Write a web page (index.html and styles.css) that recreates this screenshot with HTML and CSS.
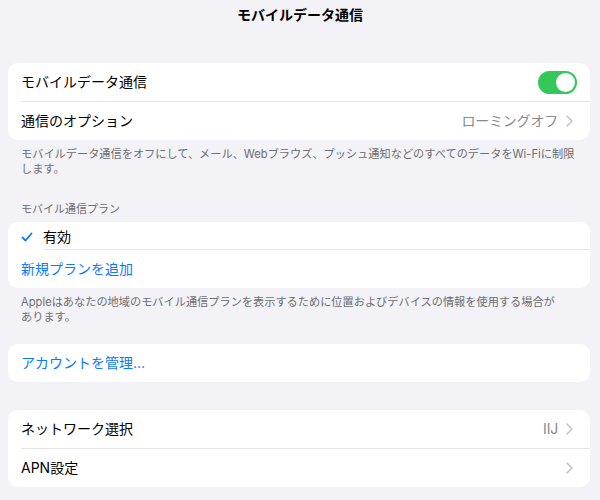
FILE: index.html
```html
<!DOCTYPE html>
<html lang="ja">
  <head>
    <meta charset="UTF-8" />
    <title>モバイルデータ通信</title>
    <link rel="stylesheet" href="styles.css">
  </head>
  <body>
    <div class="nav">モバイルデータ通信</div>

    <!-- モバイルデータ通信 -->
    <div class="card first">
      <div class="row">
        <div class="row-main">
          <span class="label">モバイルデータ通信</span>
          <span class="switch on"><span class="knob"></span></span>
        </div>
      </div>
      <div class="row">
        <div class="row-main">
          <span class="label">通信のオプション</span>
          <span class="value">ローミングオフ</span>
          <svg class="chev" width="7" height="12" viewBox="0 0 7 12"><path d="M1 1l5 5-5 5" fill="none" stroke="#c4c4c7" stroke-width="1.5" stroke-linecap="round" stroke-linejoin="round"/></svg>
        </div>
      </div>
    </div>
    <p class="foot">モバイルデータ通信をオフにして、メール、Webブラウズ、プッシュ通知などのすべてのデータをWi-Fiに制限します。</p>

    <!-- モバイル通信プラン -->
    <div class="section-title">モバイル通信プラン</div>
    <div class="card">
      <div class="row">
        <svg class="check" width="12" height="10" viewBox="0 0 12 10"><path d="M1.5 5.5l3 3 6-7" fill="none" stroke="#0a7aff" stroke-width="1.8" stroke-linecap="round" stroke-linejoin="round"/></svg>
        <div class="row-main short">
          <span class="label">有効</span>
        </div>
      </div>
      <div class="row">
        <div class="row-main">
          <span class="label link">新規プランを追加</span>
        </div>
      </div>
    </div>
    <p class="foot">Appleはあなたの地域のモバイル通信プランを表示するために位置およびデバイスの情報を使用する場合が<span class="nw">あります。</span></p>

    <div class="card account">
      <div class="row">
        <div class="row-main">
          <span class="label link">アカウントを管理...</span>
        </div>
      </div>
    </div>

    <div class="card network">
      <div class="row">
        <div class="row-main">
          <span class="label">ネットワーク選択</span>
          <span class="value">IIJ</span>
          <svg class="chev" width="7" height="12" viewBox="0 0 7 12"><path d="M1 1l5 5-5 5" fill="none" stroke="#c4c4c7" stroke-width="1.5" stroke-linecap="round" stroke-linejoin="round"/></svg>
        </div>
      </div>
      <div class="row">
        <div class="row-main">
          <span class="label">APN設定</span>
          <svg class="chev" width="7" height="12" viewBox="0 0 7 12"><path d="M1 1l5 5-5 5" fill="none" stroke="#c4c4c7" stroke-width="1.5" stroke-linecap="round" stroke-linejoin="round"/></svg>
        </div>
      </div>
    </div>
  </body>
</html>
```

FILE: styles.css
```css
* {
  margin: 0;
  padding: 0;
  box-sizing: border-box;
}
body {
  background-color: #f2f2f7;
  font-family: Inter, "Noto Sans CJK JP", sans-serif;
  color: #000;
}
.nav {
  height: 30px;
  line-height: 30px;
  text-align: center;
  font-size: 14px;
  font-weight: bold;
}
/* 
  カード
*/
.card {
  background-color: #fff;
  border-radius: 10px;
  margin: 0 10px 0 8px;
  overflow: hidden;
}
.card.first {
  margin-top: 33px;
}
.card.account {
  margin-top: 19px;
}
.card.network {
  margin-top: 28px;
}
.row {
  display: flex;
  align-items: center;
  padding-left: 13px;
}
.row-main {
  flex: 1;
  display: flex;
  align-items: center;
  height: 38px;
  padding-right: 13px;
  box-sizing: content-box;
}
.row:not(:last-child) .row-main {
  border-bottom: 1px solid #e4e4e8;
}
.row-main.short {
  height: 24px;
  padding-top: 3px;
}
.label {
  flex: 1;
  font-size: 14px;
  margin-bottom: 2px;
}
.link {
  color: #0a7aff;
}
.value {
  font-size: 14px;
  letter-spacing: -0.2px;
  color: #8a8a8e;
  margin-bottom: 2px;
}
.chev {
  margin: 0 4px 0 8px;
}
.check {
  margin: 1px 10px 0 0;
}
/* 
  スイッチ
*/
.switch {
  width: 39px;
  height: 23px;
  border-radius: 12px;
  background-color: #34c759;
  padding: 2px;
  display: flex;
  justify-content: flex-end;
}
.knob {
  width: 19px;
  height: 19px;
  border-radius: 50%;
  background-color: #fff;
}
/* 
  説明文
*/
.foot {
  padding: 7px 20px 0 21px;
  font-size: 11.2px;
  line-height: 15px;
  color: #6d6d72;
}
.nw {
  white-space: nowrap;
}
.section-title {
  margin-top: 25px;
  margin-bottom: 5px;
  padding-left: 21px;
  font-size: 11px;
  line-height: 15px;
  color: #6d6d72;
}
```
